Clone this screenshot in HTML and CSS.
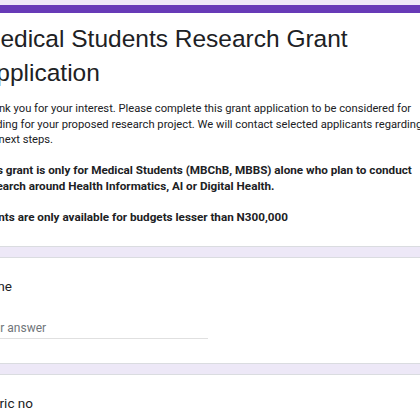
FILE: index.html
```html
<!DOCTYPE html>
<html lang="en">
<head>
<meta charset="utf-8">
<title>Medical Students Research Grant Application</title>
<link rel="stylesheet" href="styles.css">
</head>
<body>
<div class="form">
  <div class="card card-header">
    <h1 class="title">Medical Students Research Grant Application</h1>
    <div class="desc">
      <p>Thank you for your interest. Please complete this grant application to be considered for funding for your proposed research project. We will contact selected applicants regarding the next steps.</p>
      <p class="bold">This grant is only for Medical Students (MBChB, MBBS) alone who plan to conduct research around Health Informatics, AI or Digital Health.</p>
      <p class="bold">Grants are only available for budgets lesser than N300,000</p>
    </div>
  </div>
  <div class="card question">
    <div class="label">Name</div>
    <div class="input"><span class="placeholder">Your answer</span></div>
  </div>
  <div class="card question">
    <div class="label">Matric no</div>
    <div class="input"><span class="placeholder">Your answer</span></div>
  </div>
</div>
</body>
</html>
```

FILE: styles.css
```css
html, body {
  margin: 0;
  padding: 0;
  background: #ede8f7;
  overflow: hidden;
}
.form {
  margin-left: -45px;
  width: 506px;
  display: flex;
  flex-direction: column;
  gap: 10px;
  padding-top: 5px;
}
.card {
  background: #fff;
  border: 1px solid #dadce0;
  border-radius: 8px;
  padding: 0 24px;
  box-sizing: border-box;
  width: 506px;
}
.card-header {
  border-top: 8px solid #673ab7;
  padding-top: 9px;
  padding-bottom: 21px;
}
.title {
  margin: 0;
  font-family: "Liberation Sans", Arial, sans-serif;
  font-weight: 400;
  font-size: 24.5px;
  line-height: 34px;
  color: #202124;
}
.desc {
  margin-top: 11px;
  font-family: Roboto, "Liberation Sans", sans-serif;
  font-size: 11.2px;
  line-height: 15.5px;
  color: #202124;
}
.desc p {
  margin: 0 0 15.5px 0;
}
.desc p:last-child {
  margin-bottom: 0;
}
.desc .bold {
  font-weight: 700;
  font-size: 11.7px;
}
.question {
  padding-top: 18px;
  padding-bottom: 24px;
}
.label {
  font-family: Roboto, "Liberation Sans", sans-serif;
  font-size: 13.5px;
  line-height: 20px;
  color: #202124;
  margin-left: -4px;
}
.input {
  margin-top: 24px;
  width: 50%;
  border-bottom: 1px solid #e0e0e0;
  padding-bottom: 2px;
  font-family: Roboto, "Liberation Sans", sans-serif;
  font-size: 12px;
  line-height: 16px;
}
.placeholder {
  color: #70757a;
}
```
